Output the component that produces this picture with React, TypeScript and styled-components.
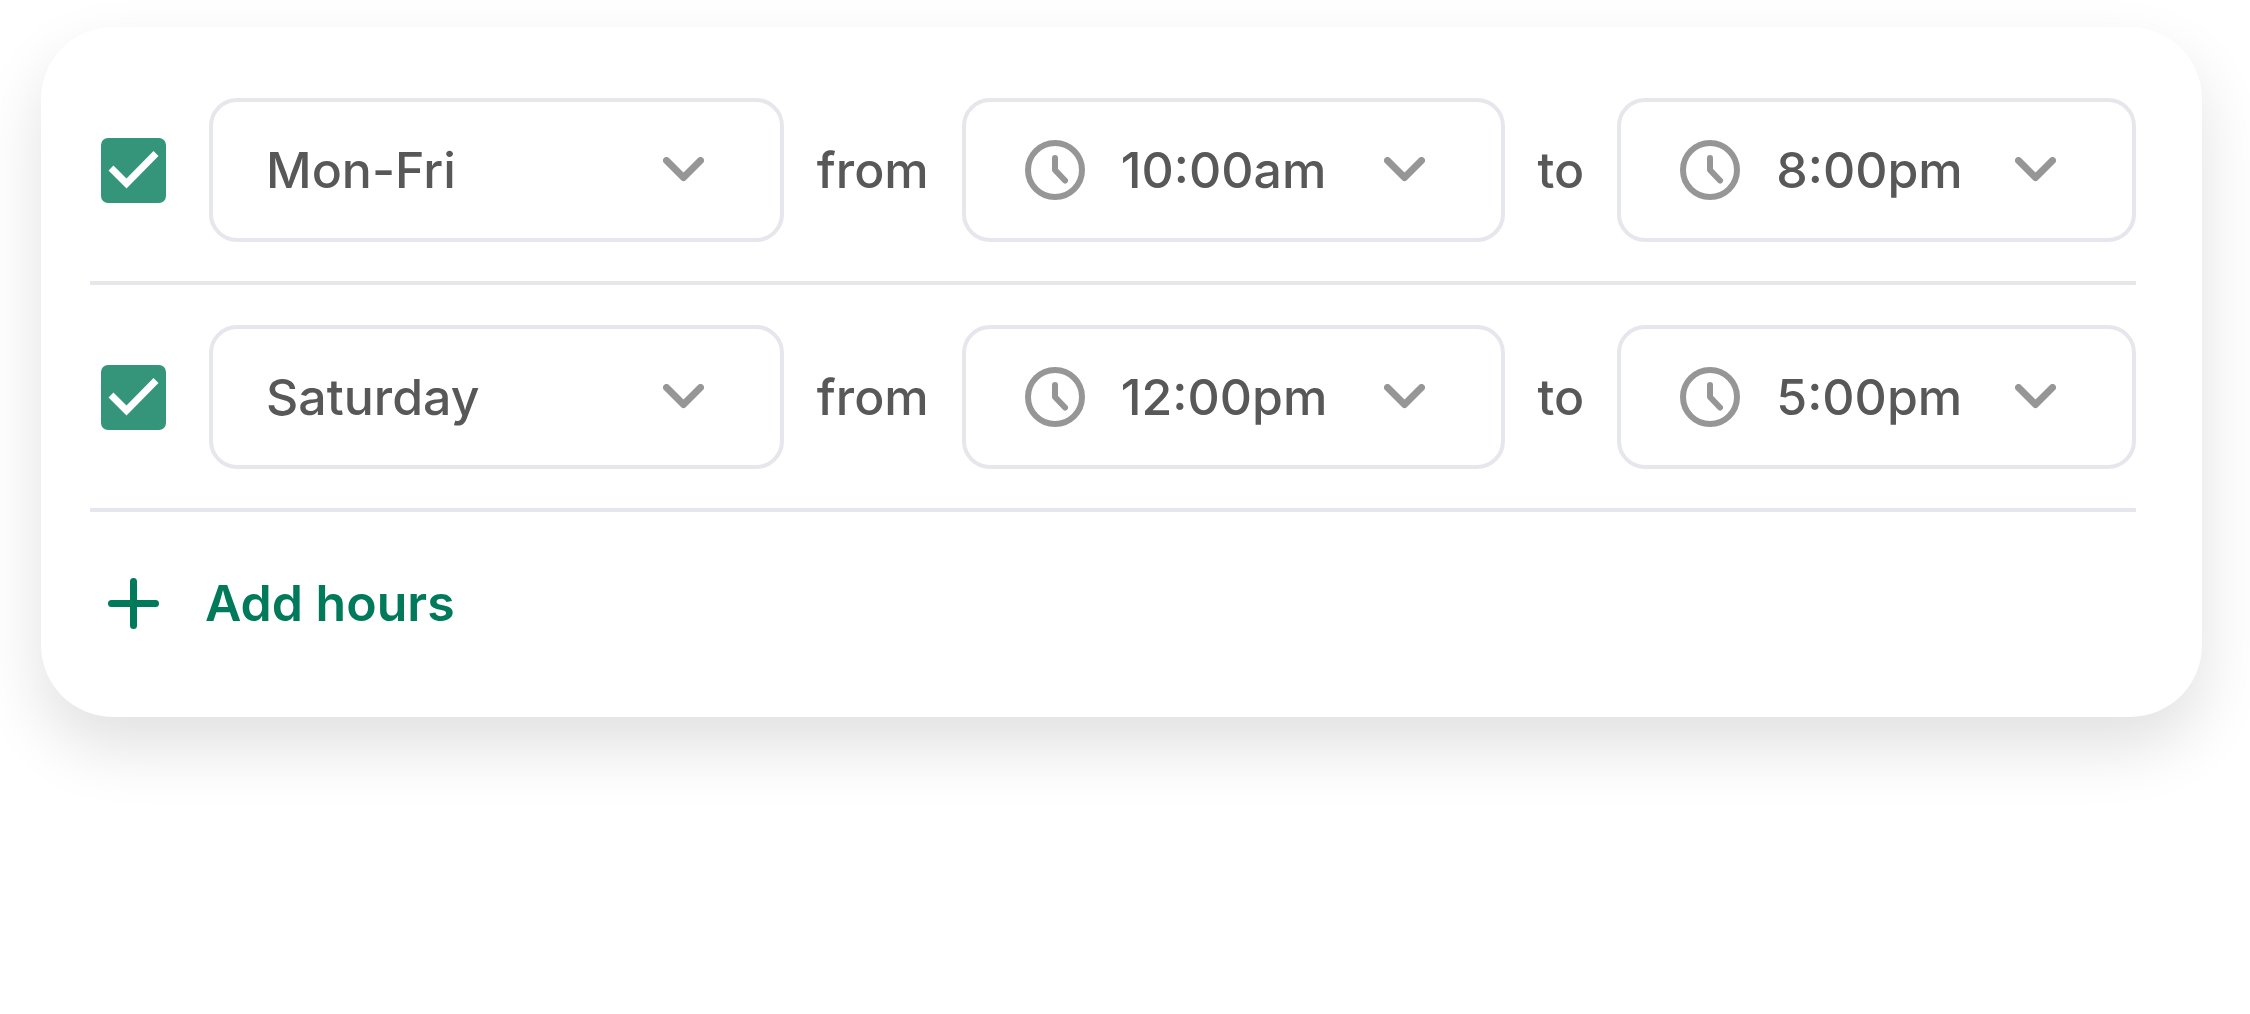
import React, { useState } from 'react';
import styled, { createGlobalStyle } from 'styled-components';

const GlobalStyle = createGlobalStyle`
  *, *::before, *::after { box-sizing: border-box; }
  body {
    margin: 0;
    background: #ffffff;
    color: #585858;
    font-family: Inter, "Liberation Sans", sans-serif;
  }
`;

const Page = styled.main`
  padding: 27px 48px 120px 41px;
`;

const Card = styled.form`
  padding: 31px 66px 82px 49px;
  border-radius: 72px;
  background: #ffffff;
  box-shadow: 0 30px 64px rgba(0, 0, 0, 0.12);
`;

const HoursRow = styled.div`
  display: grid;
  grid-template-columns: 86px minmax(0, 574fr) auto minmax(0, 542fr) auto minmax(0, 518fr);
  align-items: center;
  column-gap: 33px;
  padding: 40px 0 39px;
  border-bottom: 4px solid #e6e6ed;
`;

const CheckBox = styled.span`
  display: grid;
  width: 65px;
  height: 65px;
  margin-left: 11px;

  & > * { grid-area: 1 / 1; }
`;

const CheckInput = styled.input`
  appearance: none;
  width: 65px;
  height: 65px;
  margin: 0;
  border: 4px solid #34957b;
  border-radius: 7px;
  background: #ffffff;
  cursor: pointer;

  &:checked { background: #34957b; }
`;

const CheckMark = styled.svg`
  width: 65px;
  height: 65px;
  pointer-events: none;
`;

const Word = styled.span`
  font-size: 50px;
  font-weight: 500;
  line-height: 64px;
`;

const Field = styled.div`
  display: grid;
  align-items: center;

  & > * { grid-area: 1 / 1; }
`;

const Select = styled.select<{ $withIcon?: boolean }>`
  appearance: none;
  width: 100%;
  height: 144px;
  padding: 0 124px 0 ${(p) => (p.$withIcon ? 155 : 53)}px;
  border: 4px solid #e6e6ed;
  border-radius: 28px;
  background: #ffffff;
  color: inherit;
  font-family: inherit;
  font-size: 50px;
  font-weight: 500;
  cursor: pointer;
`;

const ClockSvg = styled.svg`
  width: 60px;
  height: 60px;
  margin-left: 63px;
  pointer-events: none;
`;

const ChevronSvg = styled.svg`
  justify-self: end;
  width: 41px;
  height: 26px;
  margin-right: 80px;
  pointer-events: none;
`;

const AddButton = styled.button`
  display: flex;
  align-items: center;
  gap: 46px;
  margin-top: 59px;
  padding: 0 0 0 18px;
  border: 0;
  background: none;
  color: #007a5a;
  font-family: inherit;
  font-size: 50px;
  font-weight: 600;
  line-height: 64px;
  cursor: pointer;
`;

const PlusSvg = styled.svg`
  width: 51px;
  height: 51px;
`;

const Chevron = () => (
  <ChevronSvg viewBox="0 0 41 26" fill="none" stroke="#969696" strokeWidth="7" strokeLinecap="round" strokeLinejoin="round" aria-hidden="true">
    <path d="M3.5 3.5 20.5 20.5 37.5 3.5" />
  </ChevronSvg>
);

const Clock = () => (
  <ClockSvg viewBox="0 0 60 60" fill="none" stroke="#969696" strokeWidth="6" strokeLinecap="round" strokeLinejoin="round" aria-hidden="true">
    <circle cx="30" cy="30" r="27" />
    <path d="M30 18V30L40 40.5" />
  </ClockSvg>
);

interface SelectFieldProps {
  label: string;
  value: string;
  options: string[];
  clock?: boolean;
}

const SelectField = ({ label, value, options, clock }: SelectFieldProps) => (
  <Field>
    <Select aria-label={label} defaultValue={value} $withIcon={clock}>
      {options.map((o) => (
        <option key={o}>{o}</option>
      ))}
    </Select>
    {clock && <Clock />}
    <Chevron />
  </Field>
);

const DAYS = ['Mon-Fri', 'Saturday', 'Sunday'];
const OPENING = ['10:00am', '11:00am', '12:00pm'];
const CLOSING = ['5:00pm', '6:00pm', '7:00pm', '8:00pm'];

interface Hours {
  day: string;
  from: string;
  to: string;
}

export default function App() {
  const [rows, setRows] = useState<Hours[]>([
    { day: 'Mon-Fri', from: '10:00am', to: '8:00pm' },
    { day: 'Saturday', from: '12:00pm', to: '5:00pm' },
  ]);

  return (
    <>
      <GlobalStyle />
      <Page>
        <Card>
          {rows.map((row, i) => (
            <HoursRow key={i}>
              <CheckBox>
                <CheckInput type="checkbox" defaultChecked aria-label={`Open ${row.day}`} />
                <CheckMark viewBox="0 0 65 65" fill="none" stroke="#ffffff" strokeWidth="7" aria-hidden="true">
                  <path d="M10 30 25.5 45.5 55 15.5" />
                </CheckMark>
              </CheckBox>
              <SelectField label="Days" value={row.day} options={DAYS} />
              <Word>from</Word>
              <SelectField label="Opening time" value={row.from} options={OPENING} clock />
              <Word>to</Word>
              <SelectField label="Closing time" value={row.to} options={CLOSING} clock />
            </HoursRow>
          ))}
          <AddButton
            type="button"
            onClick={() => setRows([...rows, { day: 'Sunday', from: '12:00pm', to: '5:00pm' }])}
          >
            <PlusSvg viewBox="0 0 51 51" fill="none" stroke="currentColor" strokeWidth="7" strokeLinecap="round" aria-hidden="true">
              <path d="M25.5 3.5V47.5M3.5 25.5H47.5" />
            </PlusSvg>
            Add hours
          </AddButton>
        </Card>
      </Page>
    </>
  );
}
